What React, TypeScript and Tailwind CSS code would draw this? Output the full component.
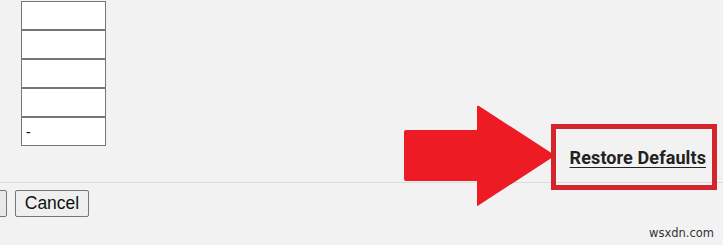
export default function App() {
  const fields = ['', '', '', '', '-'];

  return (
    <div className="relative h-[245px] w-[723px] overflow-hidden bg-[#f2f2f2] font-['Roboto','Liberation_Sans',sans-serif] text-[#222]">
      {/* Settings fields + restore link */}
      <div className="flex h-[183px] items-end justify-between border-b border-[#dcdcdc]">
        <div className="flex flex-col self-start pl-[21px] pt-px">
          {fields.map((v, i) => (
            <input
              key={i}
              readOnly
              value={v}
              className="box-border h-[29px] w-[85px] border border-[#767676] bg-white px-[4px] font-['Liberation_Sans',sans-serif] text-[14px] text-black outline-none"
            />
          ))}
        </div>
        <a
          href="#"
          className="mb-[15px] mr-[17px] text-[18px] font-bold leading-none tracking-[0.1px] text-[#222] underline underline-offset-[3px]"
        >
          Restore Defaults
        </a>
      </div>

      {/* Footer buttons (first one is scrolled out to the left) */}
      <div className="flex gap-[8px] pt-[7px]">
        <button
          aria-label="Save"
          className="ml-[-60px] box-border h-[27px] w-[67px] rounded-[2px] border border-[#767676] bg-[#e9e9e9]"
        />
        <button className="box-border h-[27px] w-[74px] rounded-[2px] border border-[#767676] bg-[#efefef] font-['Liberation_Sans',sans-serif] text-[17.5px] leading-none text-[#111]">
          Cancel
        </button>
      </div>

      {/* Annotation: arrow */}
      <svg
        className="absolute left-[400px] top-[100px]"
        width="160"
        height="112"
        viewBox="0 0 160 112"
      >
        <path
          d="M6 30 L77 30 L77 7 Q77 5 79 6 L153 54 Q155 56 153 57 L79 105 Q77 107 77 105 L77 81 L6 81 Q4 81 4 79 L4 32 Q4 30 6 30 Z"
          fill="#ed1c24"
        />
      </svg>

      {/* Annotation: highlight box */}
      <div className="absolute left-[551px] top-[124px] h-[66px] w-[166px] border-[5px] border-[#d4252d]" />

      {/* Watermark */}
      <span className="absolute left-[649px] top-[228px] font-['DejaVu_Sans',sans-serif] text-[11.5px] leading-none text-[#333]">
        wsxdn.com
      </span>
    </div>
  );
}
